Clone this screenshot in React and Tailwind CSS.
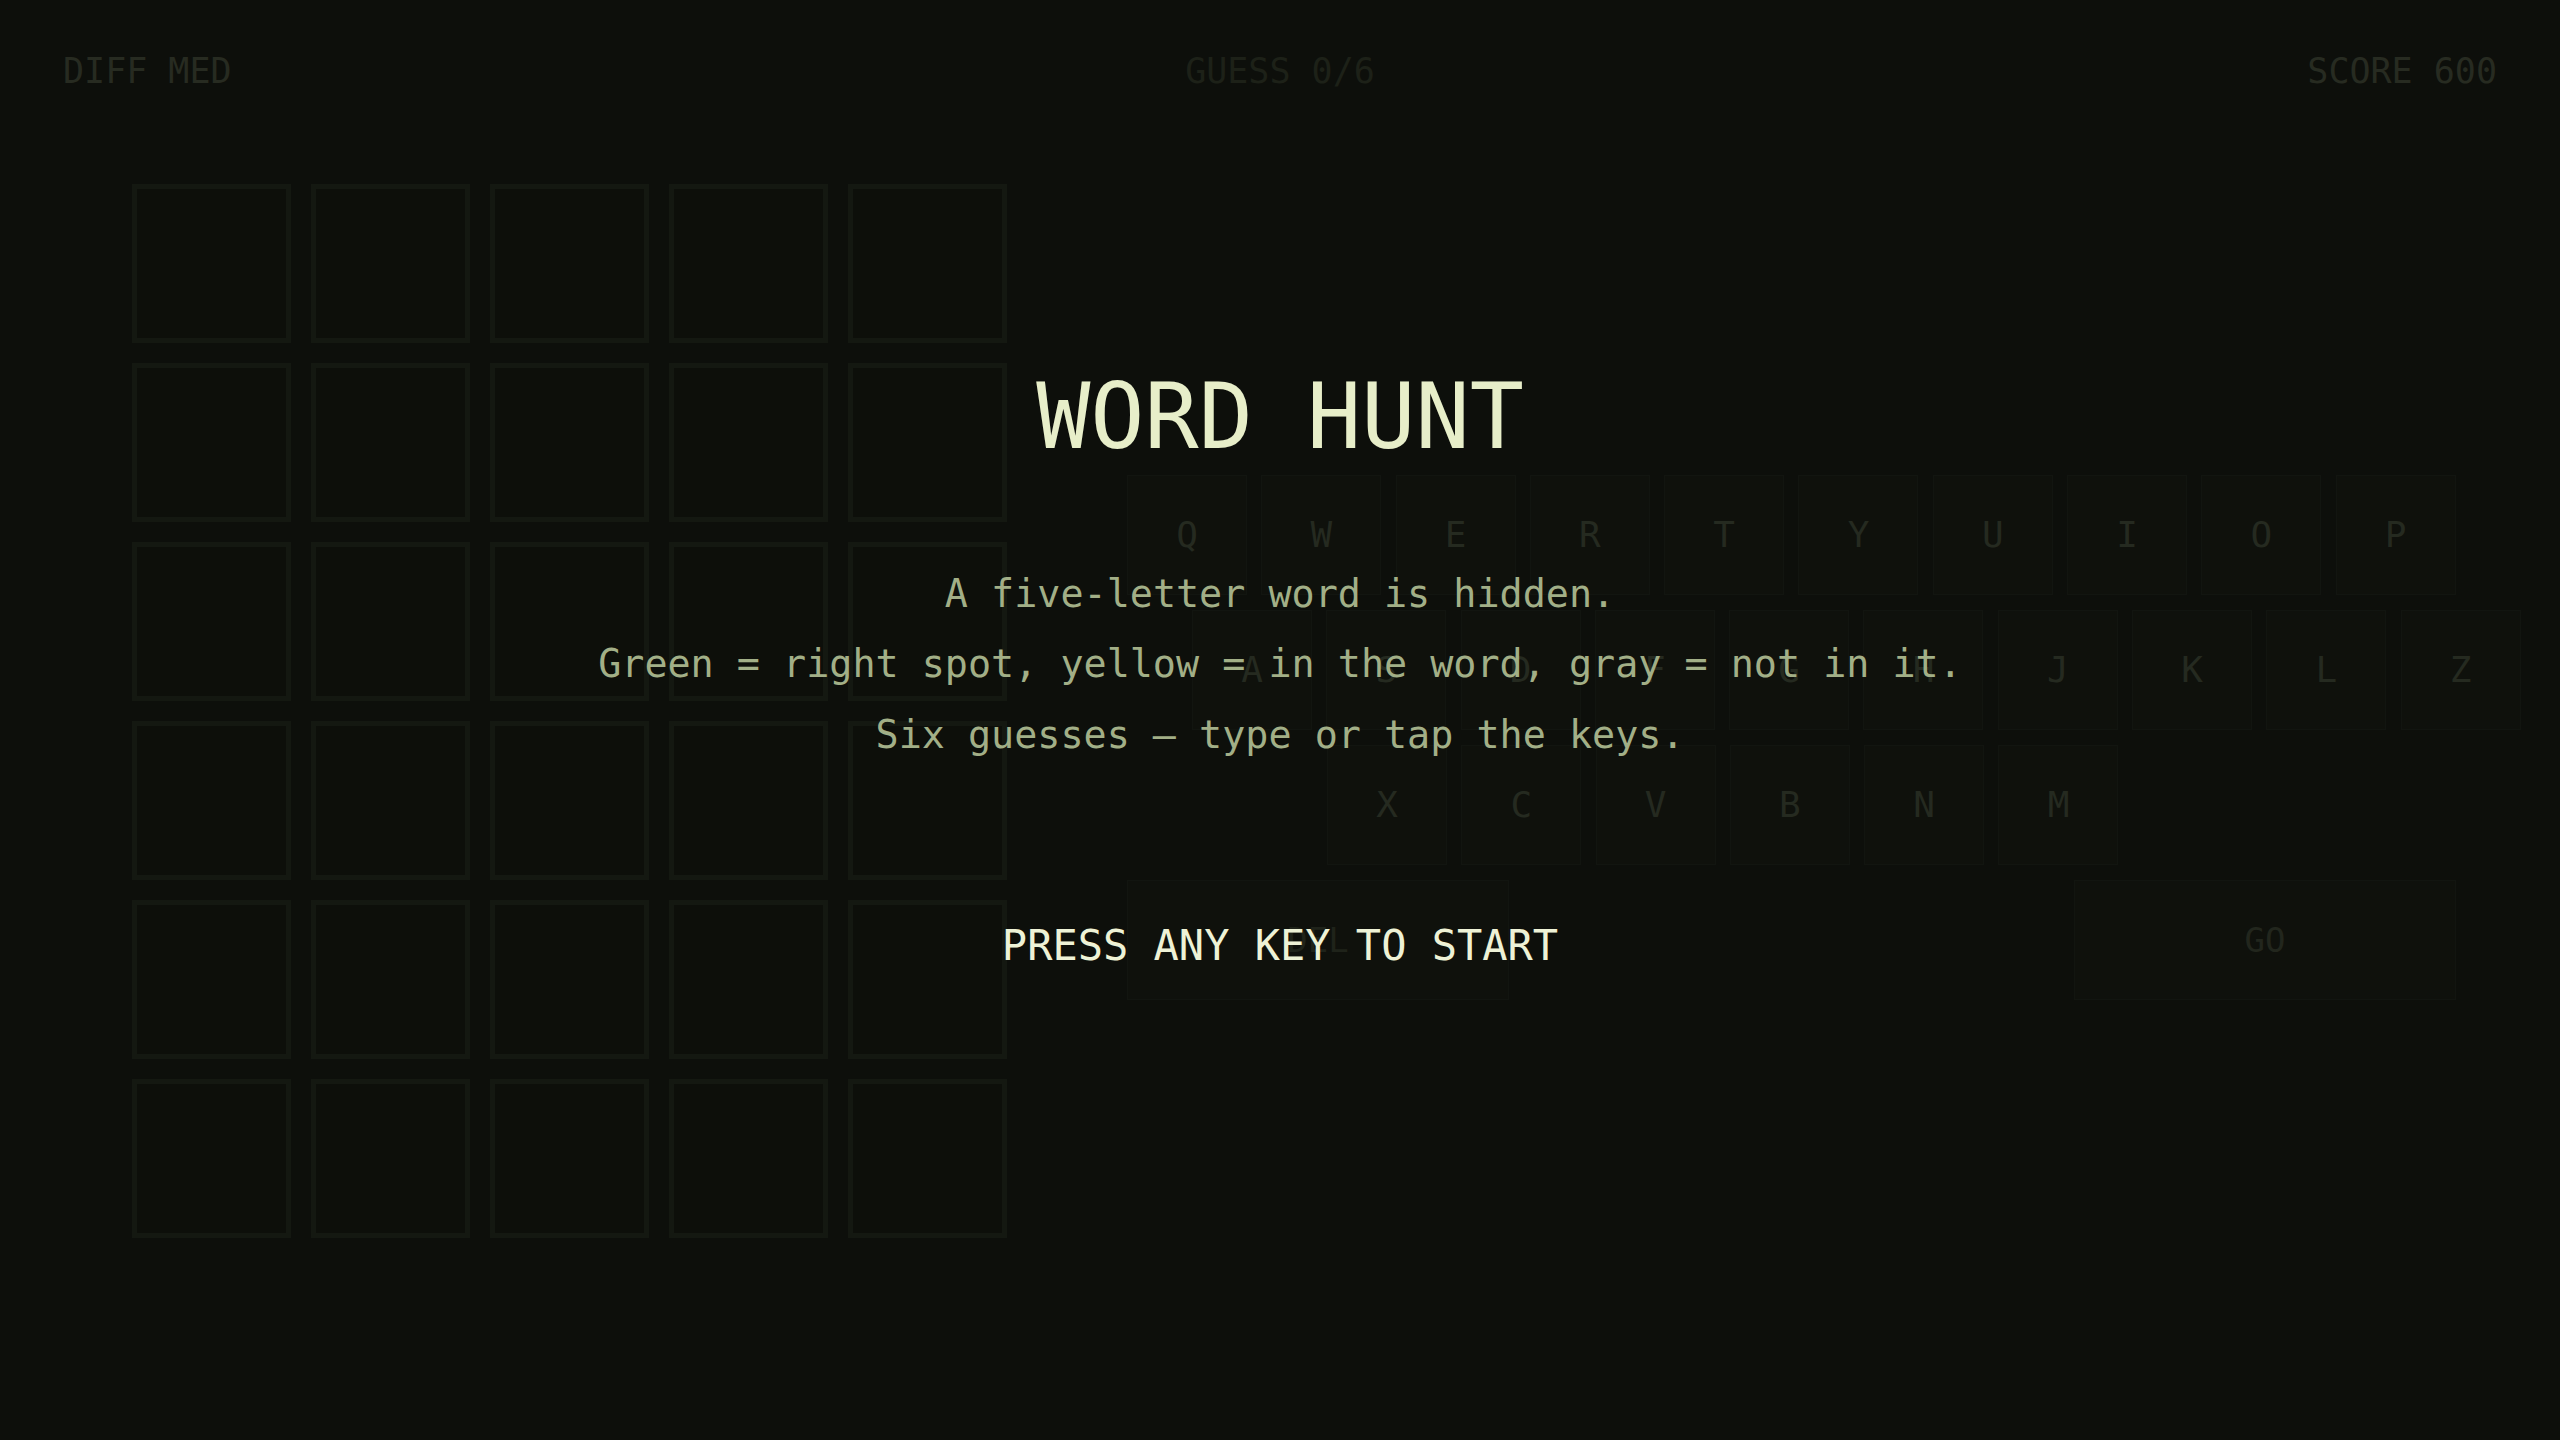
import React from 'react';

const ROW1 = ['Q', 'W', 'E', 'R', 'T', 'Y', 'U', 'I', 'O', 'P'];
const ROW2 = ['A', 'S', 'D', 'F', 'G', 'H', 'J', 'K', 'L', 'Z'];
const ROW3 = ['X', 'C', 'V', 'B', 'N', 'M'];

const Key = ({ label }) => (
    <div className="w-[120px] h-[120px] shrink-0 flex items-center justify-center bg-[#0f110c] border border-[#121510] text-[36px] leading-none text-[#252a20]">
        {label}
    </div>
);

const Board = () => (
    <div className="grid grid-cols-5 gap-[20px] shrink-0">
        {Array.from({ length: 30 }).map((_, i) => (
            <div
                key={i}
                className="w-[159px] h-[159px] border-[5px] border-[#141811] bg-[#0d0f0a]"
            />
        ))}
    </div>
);

const Keyboard = () => (
    <div className="flex flex-col gap-[15px] mt-[291px] w-[1329px] shrink-0">
        <div className="flex gap-[14.3px]">
            {ROW1.map((k) => <Key key={k} label={k} />)}
        </div>
        <div className="flex gap-[14.3px] pl-[65px]">
            {ROW2.map((k) => <Key key={k} label={k} />)}
        </div>
        <div className="flex gap-[14.3px] pl-[200px]">
            {ROW3.map((k) => <Key key={k} label={k} />)}
        </div>
        <div className="flex justify-between">
            <div className="w-[382px] h-[120px] flex items-center justify-center bg-[#0f110c] border border-[#121510] text-[34px] leading-none text-[#1f231a]">
                DEL
            </div>
            <div className="w-[382px] h-[120px] flex items-center justify-center bg-[#0f110c] border border-[#121510] text-[34px] leading-none text-[#22261d]">
                GO
            </div>
        </div>
    </div>
);

export default function App() {
    return (
        <div
            className="relative w-full min-h-screen h-[1440px] overflow-hidden bg-[#0d0f0b]"
            style={{ fontFamily: '"DejaVu Sans Mono", "Liberation Mono", monospace' }}
        >
            {/* Status bar */}
            <div className="grid grid-cols-3 items-start pl-[63px] pr-[63px] pt-[54px] text-[35px] leading-none">
                <span className="text-[#272b21] justify-self-start">DIFF MED</span>
                <span className="text-[#1d2118] justify-self-center">GUESS 0/6</span>
                <span className="text-[#272b21] justify-self-end">SCORE 600</span>
            </div>

            {/* Board + keyboard */}
            <div className="flex items-start gap-[120px] pl-[132px] mt-[94.5px]">
                <Board />
                <Keyboard />
            </div>

            {/* Start overlay */}
            <div className="absolute inset-0 flex flex-col items-center pt-[372px]">
                <h1 className="text-[90px] leading-none text-[#e7eec9]">WORD HUNT</h1>
                <div className="mt-[96.6px] flex flex-col items-center text-[38.4px] leading-[70.5px] text-[#a2af87]">
                    <p>A five-letter word is hidden.</p>
                    <p>Green = right spot, yellow = in the word, gray = not in it.</p>
                    <p>Six guesses — type or tap the keys.</p>
                </div>
                <div className="mt-[155.4px] text-[42px] leading-none text-[#eef2d6]">
                    PRESS ANY KEY TO START
                </div>
            </div>
        </div>
    );
}
